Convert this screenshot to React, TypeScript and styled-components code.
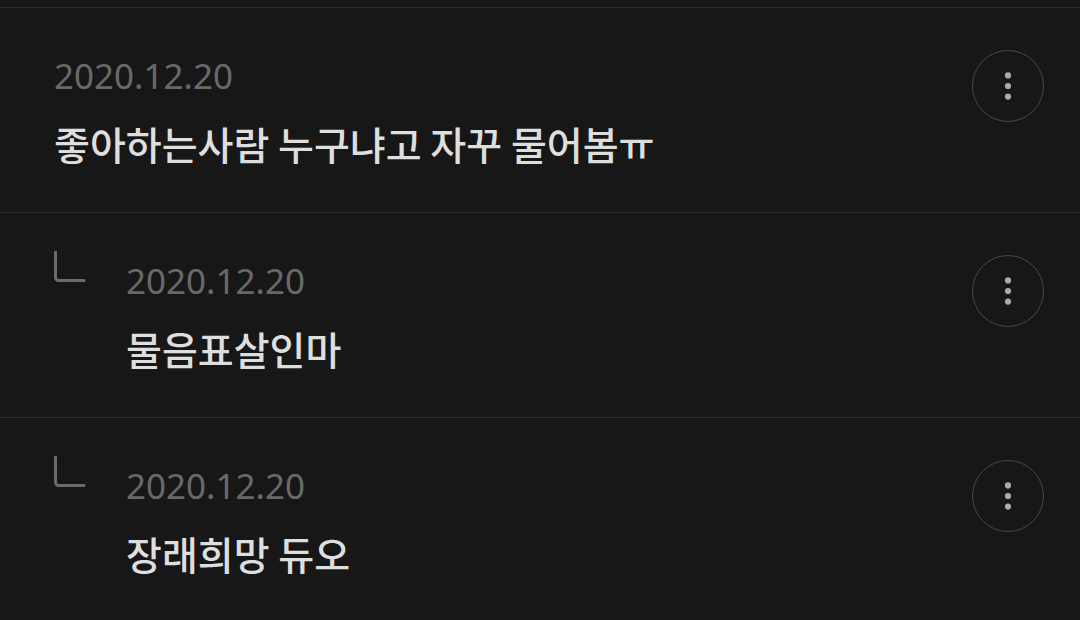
import React from "react";
import styled, { createGlobalStyle } from "styled-components";

const GlobalStyle = createGlobalStyle`
  * {
    box-sizing: border-box;
  }

  body {
    margin: 0;
    background: #171717;
    font-family: "Noto Sans CJK KR", "Noto Sans", sans-serif;
  }
`;

const Page = styled.main`
  padding-top: 7px;
`;

const CommentList = styled.ul`
  margin: 0;
  padding: 0;
  list-style: none;
`;

const CommentRow = styled.li`
  display: flex;
  align-items: flex-start;
  padding: 42px 36px 40px 54px;
  border-top: 1px solid #2d2d2d;
`;

const ReplyMark = styled.svg`
  flex: none;
  width: 32px;
  height: 32px;
  margin: -4px 40px 0 0;
`;

const CommentBody = styled.article`
  flex: 1;
  min-width: 0;
`;

const CommentDate = styled.time`
  display: block;
  color: #696969;
  font-family: "Noto Sans", "Open Sans", sans-serif;
  font-size: 35px;
  line-height: 52px;
`;

const CommentText = styled.p`
  margin: 12px 0 0;
  color: #dedede;
  font-size: 39px;
  font-weight: 500;
  line-height: 58px;
`;

const MoreButton = styled.button`
  display: flex;
  flex: none;
  align-items: center;
  justify-content: center;
  width: 72px;
  height: 72px;
  padding: 0;
  border: 1px solid #484848;
  border-radius: 50%;
  background: transparent;
  color: #aaaaaa;
  cursor: pointer;
`;

type Comment = { id: number; date: string; text: string; reply: boolean };

const comments: Comment[] = [
  { id: 1, date: "2020.12.20", text: "좋아하는사람 누구냐고 자꾸 물어봄ㅠ", reply: false },
  { id: 2, date: "2020.12.20", text: "물음표살인마", reply: true },
  { id: 3, date: "2020.12.20", text: "장래희망 듀오", reply: true },
];

export default function App() {
  return (
    <Page>
      <GlobalStyle />
      <CommentList>
        {comments.map(({ id, date, text, reply }) => (
          <CommentRow key={id}>
            {reply && (
              <ReplyMark viewBox="0 0 32 32" aria-hidden="true">
                <path
                  d="M1.5 1V26Q1.5 29.5 5 29.5H30"
                  fill="none"
                  stroke="#6b6b6b"
                  strokeWidth="3"
                  strokeLinecap="round"
                />
              </ReplyMark>
            )}
            <CommentBody>
              <CommentDate dateTime={date.replace(/\./g, "-")}>{date}</CommentDate>
              <CommentText>{text}</CommentText>
            </CommentBody>
            <MoreButton type="button" aria-label="더보기">
              <svg width="8" height="28" viewBox="0 0 8 28" fill="currentColor" aria-hidden="true">
                <circle cx="4" cy="3.4" r="3.1" />
                <circle cx="4" cy="14" r="3.1" />
                <circle cx="4" cy="24.6" r="3.1" />
              </svg>
            </MoreButton>
          </CommentRow>
        ))}
      </CommentList>
    </Page>
  );
}
